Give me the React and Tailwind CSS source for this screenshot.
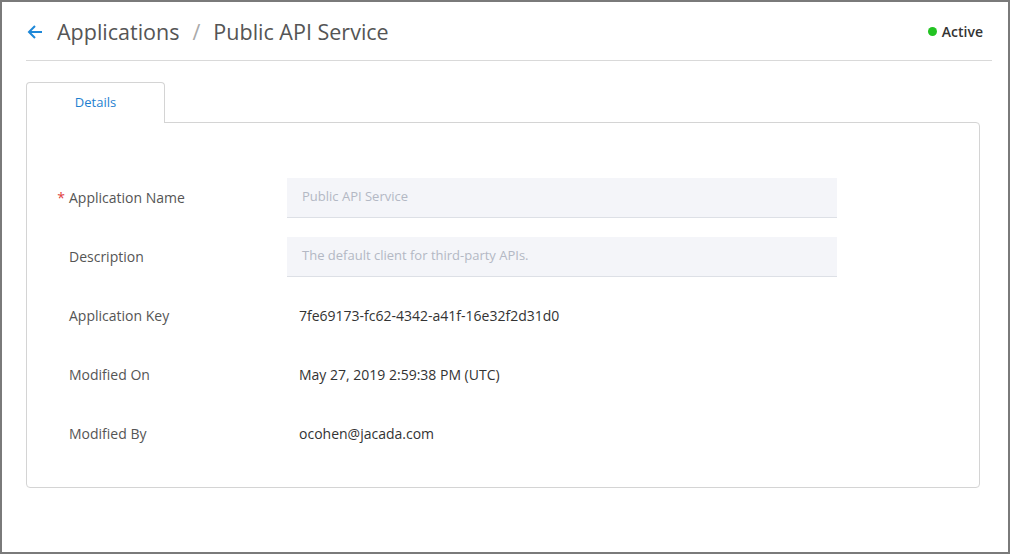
const ROWS = [
  { label: 'Application Name', value: 'Public API Service', input: true, required: true },
  { label: 'Description', value: 'The default client for third-party APIs.', input: true },
  { label: 'Application Key', value: '7fe69173-fc62-4342-a41f-16e32f2d31d0' },
  { label: 'Modified On', value: 'May 27, 2019 2:59:38 PM (UTC)' },
  { label: 'Modified By', value: 'ocohen@jacada.com' },
]

export default function App() {
  return (
    <div className="w-[1010px] h-[554px] border-2 border-[#7a7a7a] bg-white" style={{ fontFamily: '"Open Sans", sans-serif' }}>
      {/* Header */}
      <div className="ml-[24px] mr-[16px] h-[59px] flex items-center justify-between border-b border-[#d9d9d9]">
        <div className="flex items-center pt-[2px]">
          <svg width="18" height="18" viewBox="0 0 18 18" className="mr-[13px]" fill="none" stroke="#1e88d8" strokeWidth="2">
            <path d="M16 9H3M9 3L3 9l6 6" />
          </svg>
          <span className="text-[21.5px] text-[#555]">Applications</span>
          <span className="text-[21.5px] text-[#aaa] mx-[13px]">/</span>
          <span className="text-[21.5px] text-[#555]">Public API Service</span>
        </div>
        <div className="flex items-center gap-[5px] mr-[9px] text-[14px] font-semibold text-[#333]">
          <span className="w-[9px] h-[9px] rounded-full bg-[#22c322]" />
          Active
        </div>
      </div>

      {/* Tab */}
      <div className="ml-[24px] mt-[20px] w-[954px]">
        <div className="flex">
          <div className="w-[139px] h-[41px] border border-b-0 border-[#d4d4d4] rounded-t-[4px] flex items-center justify-center text-[13px] text-[#1e7fd0] bg-white relative top-[1px]">
            Details
          </div>
          <div className="flex-1" />
        </div>
        <div className="border border-[#d4d4d4] rounded-b-[4px] rounded-tr-[4px] h-[366px] pt-[45px]">
          {ROWS.map(r => (
            <div key={r.label} className="flex items-center h-[59px]">
              <div className="w-[260px] flex items-center text-[14px] text-[#555]">
                <span className="w-[42px] text-right pr-[4px] text-[#e04040]">{r.required ? '*' : ''}</span>
                {r.label}
              </div>
              {r.input ? (
                <div className="w-[550px] h-[40px] bg-[#f4f5f9] border-b border-[#dde0e6] flex items-center px-[15px] text-[13px] text-[#b3b8c4]">
                  {r.value}
                </div>
              ) : (
                <div className="pl-[12px] text-[14px] text-[#333]">{r.value}</div>
              )}
            </div>
          ))}
        </div>
      </div>
    </div>
  )
}
